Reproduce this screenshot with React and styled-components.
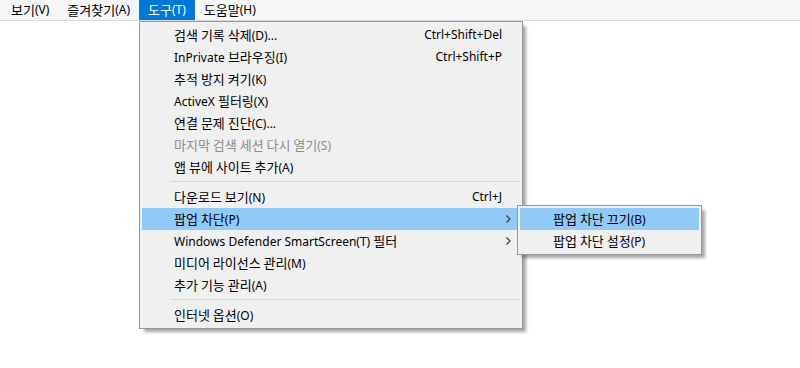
import styled, { createGlobalStyle } from 'styled-components'

const GlobalStyle = createGlobalStyle`
  html, body {
    margin: 0;
    padding: 0;
    background: #ffffff;
  }
  body {
    font-family: 'Noto Sans', 'Noto Sans CJK KR', sans-serif;
    font-size: 12px;
    color: #000000;
  }
`

const Page = styled.div`
  width: 800px;
  height: 368px;
  display: flex;
  flex-direction: column;
  overflow: hidden;
`

const MenuBar = styled.div`
  display: flex;
  height: 20px;
  padding-left: 2px;
  background: #f5f6f7;
  border-bottom: 1px solid #dadada;
`

const BarItem = styled.div`
  position: relative;
  display: flex;
  align-items: center;
  padding: 0 9px 1px;
  white-space: nowrap;
  background: ${p => (p.$open ? '#0078d7' : 'transparent')};
  color: ${p => (p.$open ? '#ffffff' : '#000000')};
`

const Dropdown = styled.div`
  position: absolute;
  top: 21px;
  left: 0;
  width: 378px;
  padding: 2px;
  background: #f0f0f0;
  border: 1px solid #979797;
  box-shadow: 4px 4px 3px -1px rgba(0, 0, 0, 0.35);
  color: #000000;
  z-index: 10;
`

const SubMenu = styled(Dropdown)`
  top: -3px;
  left: calc(100% - 3px);
  width: 179px;
`

const Row = styled.div`
  position: relative;
  display: flex;
  align-items: center;
  height: 22px;
  box-sizing: border-box;
  padding: 0 18px 1px 32px;
  white-space: nowrap;
  background: ${p => (p.$active ? '#91c9f7' : 'transparent')};
  color: ${p => (p.$disabled ? '#8d8d8d' : '#000000')};
`

const SubRow = styled(Row)`
  padding-left: 33px;
`

const Label = styled.span`
  flex: 1;
`

const Hangul = styled.span`
  font-family: 'Noto Sans CJK KR', sans-serif;
  font-size: 13px;
`

const Shortcut = styled.span`
  text-align: right;
`

const Arrow = styled.svg`
  position: absolute;
  right: 9px;
  top: 7px;
`

const Separator = styled.div`
  height: 1px;
  margin: 3px 0 4px 28px;
  background: #d7d7d7;
`

const Content = styled.div`
  flex: 1;
  background: #ffffff;
`

const Chevron = () => (
  <Arrow width="5" height="8" viewBox="0 0 5 8">
    <path d="M0.5 0.5 L4 4 L0.5 7.5" fill="none" stroke="#333333" strokeWidth="1.1" />
  </Arrow>
)

// hangul runs get the CJK face, latin stays in Noto Sans
const ko = text =>
  text
    .split(/([가-힣]+(?:\s[가-힣]+)*)/)
    .filter(Boolean)
    .map((part, i) => (/[가-힣]/.test(part) ? <Hangul key={i}>{part}</Hangul> : part))

const topItems = [
  { label: '검색 기록 삭제(D)...', shortcut: 'Ctrl+Shift+Del' },
  { label: 'InPrivate 브라우징(I)', shortcut: 'Ctrl+Shift+P' },
  { label: '추적 방지 켜기(K)' },
  { label: 'ActiveX 필터링(X)' },
  { label: '연결 문제 진단(C)...' },
  { label: '마지막 검색 세션 다시 열기(S)', disabled: true },
  { label: '앱 뷰에 사이트 추가(A)' }
]

const bottomItems = [
  { label: 'Windows Defender SmartScreen(T) 필터', sub: true },
  { label: '미디어 라이선스 관리(M)' },
  { label: '추가 기능 관리(A)' }
]

const popupItems = ['팝업 차단 끄기(B)', '팝업 차단 설정(P)']

function App() {
  return (
    <Page>
      <GlobalStyle />
      <MenuBar>
        <BarItem>{ko('보기(V)')}</BarItem>
        <BarItem>{ko('즐겨찾기(A)')}</BarItem>
        <BarItem $open>
          {ko('도구(T)')}
          <Dropdown>
            {topItems.map(item => (
              <Row key={item.label} $disabled={item.disabled}>
                <Label>{ko(item.label)}</Label>
                {item.shortcut && <Shortcut>{item.shortcut}</Shortcut>}
              </Row>
            ))}
            <Separator />
            <Row>
              <Label>{ko('다운로드 보기(N)')}</Label>
              <Shortcut>Ctrl+J</Shortcut>
            </Row>
            <Row $active>
              <Label>{ko('팝업 차단(P)')}</Label>
              <Chevron />
              <SubMenu>
                {popupItems.map((label, i) => (
                  <SubRow key={label} $active={i === 0}>
                    <Label>{ko(label)}</Label>
                  </SubRow>
                ))}
              </SubMenu>
            </Row>
            {bottomItems.map(item => (
              <Row key={item.label}>
                <Label>{ko(item.label)}</Label>
                {item.sub && <Chevron />}
              </Row>
            ))}
            <Separator />
            <Row>
              <Label>{ko('인터넷 옵션(O)')}</Label>
            </Row>
          </Dropdown>
        </BarItem>
        <BarItem>{ko('도움말(H)')}</BarItem>
      </MenuBar>
      <Content />
    </Page>
  )
}

export default App
